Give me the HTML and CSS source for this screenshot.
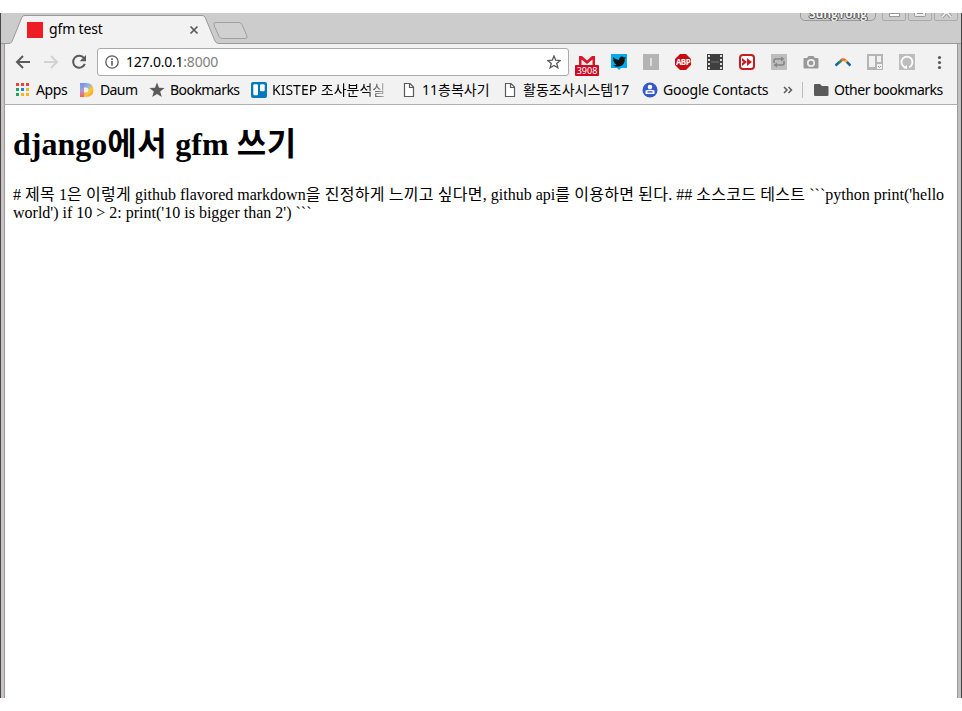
FILE: index.html
```html
<!DOCTYPE html>
<html lang="ko">
<head>
<meta charset="utf-8">
<title>gfm test</title>
<link rel="stylesheet" href="styles.css">
</head>
<body>
<div class="window">
  <header class="tabstrip">
    <svg class="tabshape" width="260" height="31" viewBox="0 0 260 31">
      <path d="M0 30.5H6Q8 30.5 9 28.5L19 4Q20 2.5 22 2.5H199Q201 2.5 202 4L212 28Q213 30.5 216 30.5H260V31H0Z" fill="#f2f2f2"/>
      <path d="M0 30.5H5Q8 30.5 9 28.5L19 4Q20 2.5 22 2.5H199Q201 2.5 202 4L212 28Q213 30.5 216 30.5H260" fill="none" stroke="#999"/>
      <path d="M213 9.5H236Q238 9.5 239 11.5L244 23Q245 25.5 242 25.5H219.500Q217 25.500 216 23.500L211 12Q210 9.500 213 9.500Z" fill="#d0d0d0" stroke="#a0a0a0"/>
    </svg>
    <div class="tab"><span class="favicon"></span><span class="tabtitle">gfm test</span>
      <svg class="close" width="10" height="10" viewBox="0 0 10 10"><path d="M1.500 1.500L8.500 8.500M8.500 1.500L1.500 8.500" stroke="#5a5a5a" stroke-width="1.700"/></svg>
    </div>
    <div class="controls">
      <span class="user">SungYong</span>
      <span class="ctl"><svg width="22" height="18"><rect x="6.500" y="9.500" width="10" height="3" fill="#fff" stroke="#999"/></svg></span>
      <span class="ctl"><svg width="22" height="18"><rect x="5.500" y="3.500" width="11" height="9" rx="1" fill="#eee" stroke="#999"/><rect x="8.500" y="7.500" width="5" height="2" fill="#ccc" stroke="#999"/></svg></span>
      <span class="ctl"><svg width="22" height="18"><path d="M7 3L16 13M16 3L7 13" stroke="#999" stroke-width="3.500"/><path d="M7 3L16 13M16 3L7 13" stroke="#eee" stroke-width="1.800"/></svg></span>
    </div>
  </header>

  <nav class="toolbar">
    <svg class="nav" width="16" height="16" viewBox="0 0 16 16" fill="none" stroke="#5a5a5a" stroke-width="2"><path d="M15 8H2.500M8 2L2 8L8 14"/></svg>
    <svg class="nav" width="16" height="16" viewBox="0 0 16 16" fill="none" stroke="#d2d2d2" stroke-width="2"><path d="M1 8H13.500M8 2L14 8L8 14"/></svg>
    <svg class="nav" width="16" height="16" viewBox="0 0 16 16"><path d="M13 4.200A6 6 0 1 0 13.800 9.800" fill="none" stroke="#5a5a5a" stroke-width="2"/><path d="M15 1V7.300H8.700Z" fill="#5a5a5a"/></svg>
    <div class="omnibox">
      <svg width="14" height="14" viewBox="0 0 14 14"><circle cx="7" cy="7" r="6.200" fill="none" stroke="#5a5a5a" stroke-width="1.300"/><path d="M7 6V10.500M7 3.300V4.900" stroke="#5a5a5a" stroke-width="1.600"/></svg>
      <span class="url">127.0.0.1<span class="port">:8000</span></span>
      <svg class="fav" width="14" height="14" viewBox="0 0 14 14"><path d="M7 1L8.700 5.200L13.200 5.500L9.700 8.400L10.900 12.800L7 10.400L3.100 12.800L4.300 8.400L.8 5.500L5.300 5.200Z" fill="none" stroke="#5a5a5a" stroke-width="1.300"/></svg>
    </div>
    <div class="extensions">
      <div class="ext"><svg width="24" height="24" viewBox="0 0 24 24"><path d="M4.500 6H19.500V15H4.500Z" fill="#eee"/><path d="M4 6H7L12 10.500L17 6H20V15H17.500V9.500L12 14L6.500 9.500V15H4Z" fill="#d8182a"/></svg><span class="count">3908</span></div>
      <svg width="16" height="16" viewBox="0 0 16 16"><path d="M0 0H16V14H10L8 16L6 14H0Z" fill="#00aced"/><path d="M2 3Q4.500 6 8 6Q8 3 10.500 2.500Q12 2.300 13 3.500L15 3L13.800 5Q14 10 10 12Q6 13.800 2 11.500Q4.500 11.500 5.500 10.500Q3.500 10 3 8.500H4Q2 7.500 2 5.500L3 5.800Q1.500 4.500 2 3Z" fill="#111"/></svg>
      <svg width="16" height="16" viewBox="0 0 16 16"><rect width="16" height="16" fill="#b4b4b4"/><path d="M8 4V12" stroke="#eee" stroke-width="1.500"/></svg>
      <div class="abp"><svg width="16" height="16" viewBox="0 0 16 16"><path d="M5 0H11L16 5V11L11 16H5L0 11V5Z" fill="#c70d12"/></svg><span>ABP</span></div>
      <svg width="16" height="16" viewBox="0 0 16 16"><rect width="16" height="16" fill="#3f3f3f"/><path d="M2 1V16M14 1V16" stroke="#ddd" stroke-width="2" stroke-dasharray="2 2"/><path d="M4 8H12" stroke="#777"/></svg>
      <svg width="16" height="16" viewBox="0 0 16 16"><rect x="1" y="1" width="14" height="14" rx="3" fill="#fff" stroke="#c41e22" stroke-width="2"/><path d="M3 4L8 8L3 12ZM8 4L13 8L8 12Z" fill="#c41e22"/><path d="M3 7L4.500 8L3 9Z" fill="#fff"/></svg>
      <svg width="16" height="16" viewBox="0 0 16 16"><rect width="16" height="16" fill="#bdbdbd"/><path d="M3 9V6.500Q3 5 4.500 5H11M13 7V9.500Q13 11 11.500 11H5" fill="none" stroke="#858585" stroke-width="1.600"/><path d="M10 2.500L13.500 5L10 7.500ZM6 8.500L2.500 11L6 13.500Z" fill="#858585"/></svg>
      <svg width="16" height="16" viewBox="0 0 16 16"><path d="M1.500 4H4L5.500 2H10.500L12 4H14.500Q15.500 4 15.500 5V13.500Q15.500 14.500 14.500 14.500H1.500Q.5 14.500 .5 13.500V5Q.5 4 1.500 4Z" fill="#999"/><circle cx="8" cy="9" r="3.200" fill="#999" stroke="#eee" stroke-width="1.700"/></svg>
      <svg width="16" height="16" viewBox="0 0 16 16" fill="none" stroke-width="2.600"><path d="M.5 11.500L4.500 8" stroke="#1764a8"/><path d="M4 8.500L6.500 6.500" stroke="#159957"/><path d="M6 6.500Q8 4.500 10.500 6.500" stroke="#f0603a"/><path d="M10 6L12 8" stroke="#f7b817"/><path d="M11.800 7.800L15.500 11.500" stroke="#1764a8"/></svg>
      <svg width="16" height="16" viewBox="0 0 16 16"><rect width="16" height="16" fill="#b5b5b5"/><path d="M2 2H8V13H2ZM10 2H14V8H10ZM10 10H15V15H10Z" fill="#f1f1f1"/><path d="M11 12L12.500 13.500L14 12" stroke="#999" fill="none"/></svg>
      <svg width="16" height="16" viewBox="0 0 16 16"><rect width="16" height="16" fill="#bcbcbc"/><path d="M5.500 13A5.500 5.500 0 1 1 10 13.200" fill="none" stroke="#fff" stroke-width="1.800"/><path d="M4 14L8 11V15Z" fill="#fff"/></svg>
      <svg width="16" height="16" viewBox="0 0 16 16" fill="#5a5a5a"><circle cx="8.500" cy="3.500" r="1.600"/><circle cx="8.500" cy="8.500" r="1.600"/><circle cx="8.500" cy="13.500" r="1.600"/></svg>
    </div>
  </nav>

  <nav class="bookmarks">
    <div class="bm apps"><svg width="16" height="16" viewBox="0 0 16 16"><path d="M1 1h3v3h-3zM6 1h3v3h-3zM11 1h3v3h-3z" fill="#ef4136"/><path d="M1 6h3v3h-3z" fill="#1fa463"/><path d="M6 6h3v3h-3z" fill="#2b7de9"/><path d="M11 6h3v3h-3zM11 11h3v3h-3zM6 11h3v3h-3z" fill="#f6b51e"/><path d="M1 11h3v3h-3z" fill="#1fa463"/></svg><span>Apps</span></div>
    <div class="bm daum"><svg width="16" height="16" viewBox="0 0 16 16"><defs><linearGradient id="d" x1="0" y1="0" x2="1" y2="1"><stop offset="0" stop-color="#5b8cff"/><stop offset=".4" stop-color="#8fb4e0"/><stop offset=".65" stop-color="#ffc928"/><stop offset="1" stop-color="#f08a50"/></linearGradient><linearGradient id="e" x1="0" y1="0" x2="0" y2="1"><stop offset="0" stop-color="#6f94f2"/><stop offset=".55" stop-color="#b29acb"/><stop offset="1" stop-color="#ff5d55"/></linearGradient></defs><path d="M1 1H7Q14.500 1 14.500 8T7 15H1V10.500H7Q9.500 10.500 9.500 8T7 5.500H1Z" fill="url(#d)"/><path d="M1 1H5V15H1Z" fill="url(#e)"/></svg><span>Daum</span></div>
    <div class="bm marks"><svg width="16" height="16" viewBox="0 0 16 16"><path d="M8 .5L10 5.800L15.600 6L11.200 9.500L12.800 15L8 11.900L3.200 15L4.800 9.500L.4 6L6 5.800Z" fill="#5a5a5a"/></svg><span>Bookmarks</span></div>
    <div class="bm kistep"><svg width="16" height="16" viewBox="0 0 16 16"><rect width="16" height="16" rx="2" fill="#0079bf"/><rect x="2.300" y="2.300" width="4.700" height="11" rx="1" fill="#fff"/><rect x="9" y="2.300" width="4.700" height="7" rx="1" fill="#fff"/></svg><span>KISTEP 조사분석실</span></div>
    <div class="bm copier"><svg width="12" height="16" viewBox="0 0 12 16"><path d="M1.500 1.500H7L10.500 5V14.500H1.500ZM6.500 1.500V5.500H10.500" fill="#fff" stroke="#5a5a5a" stroke-width="1.200"/></svg><span>11층복사기</span></div>
    <div class="bm survey"><svg width="12" height="16" viewBox="0 0 12 16"><path d="M1.500 1.500H7L10.500 5V14.500H1.500ZM6.500 1.500V5.500H10.500" fill="#fff" stroke="#5a5a5a" stroke-width="1.200"/></svg><span>활동조사시스템17</span></div>
    <div class="bm contacts"><svg width="16" height="16" viewBox="0 0 16 16"><circle cx="8" cy="8" r="7.500" fill="#3558c8"/><circle cx="8" cy="5" r="2.300" fill="#fff"/><path d="M3.500 8.500Q8 6.800 12.500 8.500V12H3.500Z" fill="#fff"/><path d="M5.500 9.200H10.500V10.600H5.500Z" fill="#3558c8"/></svg><span>Google Contacts</span></div>
    <svg class="more" width="10" height="10" viewBox="0 0 10 10"><path d="M1 2L4 5L1 8M5.500 2L8.500 5L5.500 8" fill="none" stroke="#5a5a5a" stroke-width="1.500"/></svg>
    <i class="divider"></i>
    <div class="bm other"><svg width="16" height="14" viewBox="0 0 16 14"><path d="M1 1H6L8 3H13.500Q14.500 3 14.500 4V12Q14.500 13 13.500 13H1Q0 13 0 12V2Q0 1 1 1Z" fill="#5a5a5a"/></svg><span>Other bookmarks</span></div>
  </nav>

  <main class="page">
    <h1>django<span class="ko">에서</span> gfm <span class="ko">쓰기</span></h1>
    <p># <span class="ko">제목</span> 1<span class="ko">은</span> <span class="ko">이렇게</span> github flavored markdown<span class="ko">을</span> <span class="ko">진정하게</span> <span class="ko">느끼고</span> <span class="ko">싶다면</span>, github api<span class="ko">를</span> <span class="ko">이용하면</span> <span class="ko">된다</span>. ## <span class="ko">소스코드</span> <span class="ko">테스트</span> ```python print('hello world') if 10 &gt; 2: print('10 is bigger than 2') ```</p>
  </main>
</div>
</body>
</html>
```
FILE: styles.css
```css
* { box-sizing: border-box; }
body { margin: 0; padding-top: 13px; background: #fff; }
svg { display: block; flex: none; }
.window {
  width: 962px; height: 685px; overflow: hidden;
  background: #fff;
  border-left: 1px solid #4a4646; border-right: 1px solid #444;
  font: 14px/18px "Noto Sans", "Noto Sans CJK KR", sans-serif;
}
.tabstrip { height: 31px; position: relative; display: flex; background: #ccc; border-bottom: 1px solid #999; }
.tabshape { position: absolute; left: 2px; top: 0; }
.tab { position: relative; display: flex; align-items: center; height: 29px; margin: 2px 0 0 26px; width: 173px; }
.favicon { width: 16px; height: 16px; background: #ee1c24; margin-right: 6px; }
.tabtitle { letter-spacing: -.15px; position: relative; top: -1px; }
.close { margin-left: auto; margin-right: 1px; }
.controls { display: flex; margin-left: auto; padding-right: 5px; height: 8px; overflow: hidden; align-items: flex-end; gap: 4px; }
.user { width: 76px; height: 18px; border: 1px solid #999; border-radius: 5px; font: bold 12px/20px "Open Sans", sans-serif; letter-spacing: -.1px; text-align: center; margin-right: 2px; color: #eee; text-shadow: 1px 0 #555, -1px 0 #555, 0 1px #555, 0 -1px #555; }
.ctl { width: 24px; height: 18px; border: 1px solid #aaa; border-radius: 2px; margin-right: -2px; }
.toolbar, .bookmarks, .page { margin: 0 3px; border-left: 1px solid #999; border-right: 1px solid #999; box-shadow: -3px 0 #c8c4c2, 3px 0 #c0c0c0; }
.toolbar { height: 36px; background: #f2f2f2; display: flex; align-items: center; padding-left: 10px; }
.nav { margin-right: 12px; }
.omnibox { width: 472px; height: 28px; margin-left: -2px; border: 1px solid #aaa; border-radius: 3px; background: #fff; display: flex; align-items: center; padding: 0 7px; }
.url { margin-left: 7px; letter-spacing: -.22px; }
.port { color: #808080; }
.fav { margin-left: auto; }
.extensions { display: flex; gap: 16px; margin-left: 10px; align-items: center; }
.ext { position: relative; width: 16px; height: 16px; }
.ext svg { position: absolute; left: -4px; top: -4px; }
.count { position: absolute; left: -4px; top: 11px; width: 24px; height: 11px; border-radius: 1px; background: #cc0b25; color: #fff; font: 9px/11px "Noto Sans", sans-serif; text-align: center; }
.abp { position: relative; width: 16px; height: 16px; }
.abp span { position: absolute; inset: 0 -2px; font: bold 8px/16px "Open Sans", sans-serif; color: #fff; text-align: center; letter-spacing: -.6px; }
.bookmarks { height: 25px; background: #f2f2f2; border-bottom: 1px solid #b0b0b0; display: flex; align-items: center; padding: 0 0 4px 10px; white-space: nowrap; }
.bm { display: flex; align-items: center; gap: 5px; height: 20px; flex: none; color: #000; }
.apps { width: 64px; letter-spacing: -.4px; }
.daum { width: 70px; letter-spacing: -.6px; }
.marks { width: 102px; letter-spacing: -.55px; }
.kistep { width: 152px; }
.kistep span { width: 114px; overflow: hidden; -webkit-mask-image: linear-gradient(90deg, #000 82%, rgba(0,0,0,.2)); mask-image: linear-gradient(90deg, #000 82%, rgba(0,0,0,.2)); }
.copier { width: 101px; gap: 7px; }
.survey { width: 138px; gap: 7px; }
.contacts { width: 141px; letter-spacing: -.2px; }
.more { width: 10px; margin-right: 9px; }
.divider { width: 1px; height: 16px; background: #bbb; margin-right: 11px; }
.other { gap: 4px; letter-spacing: -.47px; }
.page { height: 593px; padding: 1px 8px 0; color: #000; font: 16px/18px "Liberation Serif", "Noto Sans CJK KR", serif; }
.page h1 { font-size: 32px; line-height: 36px; margin: 20px 0 24px; }
.page p { margin: 0; }
.page p .ko { letter-spacing: .28px; }
.page h1 .ko { letter-spacing: .6px; }
```
